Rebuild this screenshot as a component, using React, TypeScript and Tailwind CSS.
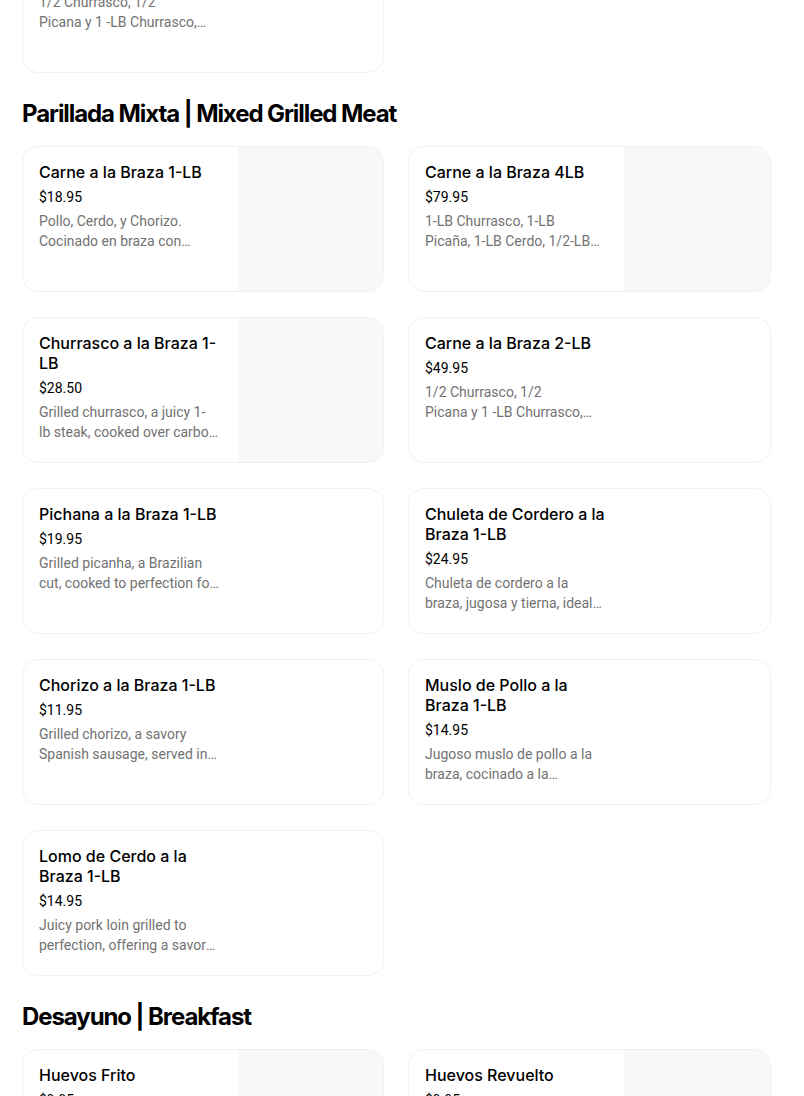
import React from "react";

type Item = {
  name: string;
  price: string;
  description: string;
  image?: boolean;
};

const previousSection: Item[] = [
  {
    name: "Carne a la Braza 2-LB",
    price: "$49.95",
    description: "1/2 Churrasco, 1/2\nPicana y 1 -LB Churrasco, 1/2-LB Cerdo y Chorizo",
  },
];

const sections: { title: string; items: Item[] }[] = [
  {
    title: "Parillada Mixta | Mixed Grilled Meat",
    items: [
      {
        name: "Carne a la Braza 1-LB",
        price: "$18.95",
        description: "Pollo, Cerdo, y Chorizo.\nCocinado en braza con carbon natural.",
        image: true,
      },
      {
        name: "Carne a la Braza 4LB",
        price: "$79.95",
        description: "1-LB Churrasco, 1-LB\nPicaña, 1-LB Cerdo, 1/2-LB Chorizo y 1/2-LB Pollo.",
        image: true,
      },
      {
        name: "Churrasco a la Braza 1-LB",
        price: "$28.50",
        description: "Grilled churrasco, a juicy 1-\nlb steak, cooked over carbon natural.",
        image: true,
      },
      {
        name: "Carne a la Braza 2-LB",
        price: "$49.95",
        description: "1/2 Churrasco, 1/2\nPicana y 1 -LB Churrasco, 1/2-LB Cerdo y Chorizo.",
      },
      {
        name: "Pichana a la Braza 1-LB",
        price: "$19.95",
        description: "Grilled picanha, a Brazilian cut, cooked to perfection for a tender bite.",
      },
      {
        name: "Chuleta de Cordero a la Braza 1-LB",
        price: "$24.95",
        description: "Chuleta de cordero a la braza, jugosa y tierna, ideal para compartir.",
      },
      {
        name: "Chorizo a la Braza 1-LB",
        price: "$11.95",
        description: "Grilled chorizo, a savory Spanish sausage, served in generous portions.",
      },
      {
        name: "Muslo de Pollo a la Braza 1-LB",
        price: "$14.95",
        description: "Jugoso muslo de pollo a la braza, cocinado a la perfección.",
      },
      {
        name: "Lomo de Cerdo a la Braza 1-LB",
        price: "$14.95",
        description: "Juicy pork loin grilled to perfection, offering a savory bite.",
      },
    ],
  },
  {
    title: "Desayuno | Breakfast",
    items: [
      {
        name: "Huevos Frito",
        price: "$9.95",
        description: "Huevos fritos servidos con arroz, frijoles y maduros.",
        image: true,
      },
      {
        name: "Huevos Revuelto",
        price: "$9.95",
        description: "Huevos revueltos servidos con arroz, frijoles y maduros.",
        image: true,
      },
    ],
  },
];

function MenuCard({ item }: { item: Item }) {
  return (
    <div className="flex h-[146px] overflow-hidden rounded-2xl border border-[#f1f1f1] bg-white">
      <div className="w-[215px] shrink-0 px-4 pt-[15px]">
        <h3 className="text-[16px] font-medium leading-5 text-black">{item.name}</h3>
        <p
          className="mt-[5px] text-[14px] leading-5 text-black"
          style={{ fontFamily: "Roboto, sans-serif" }}
        >
          {item.price}
        </p>
        <p
          className="mt-[4px] line-clamp-2 whitespace-pre-line text-[14px] leading-5 text-[#727272]"
          style={{ fontFamily: "Roboto, sans-serif" }}
        >
          {item.description}
        </p>
      </div>
      {item.image && <div className="h-full flex-1 bg-[#f8f8f8]" />}
    </div>
  );
}

export default function App() {
  return (
    <div
      className="min-h-screen overflow-hidden bg-white px-[22px]"
      style={{ fontFamily: "Inter, 'Noto Sans', sans-serif" }}
    >
      <div className="w-[749px]">
        <div className="mt-[-73px] grid grid-cols-[362px_363px] gap-x-6">
          {previousSection.map((item) => (
            <MenuCard key={item.name} item={item} />
          ))}
        </div>

        {sections.map((section) => (
          <section key={section.title}>
            <h2 className="pt-[25px] pb-[16px] text-[24px] font-bold leading-8 tracking-[-0.045em] text-black">
              {section.title}
            </h2>
            <div className="grid grid-cols-[362px_363px] gap-x-6 gap-y-[25px]">
              {section.items.map((item) => (
                <MenuCard key={item.name} item={item} />
              ))}
            </div>
          </section>
        ))}
      </div>
    </div>
  );
}
